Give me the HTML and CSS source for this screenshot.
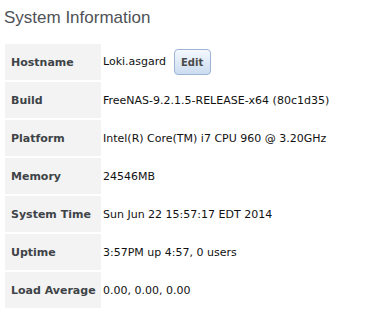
FILE: index.html
```html
<!DOCTYPE html>
<html lang="en">
<head>
    <meta charset="UTF-8">
    <title>System Information</title>
    <link rel="stylesheet" href="styles.css">
</head>
<body>
    <h1>System Information</h1>
    <table class="sysinfo">
        <tr>
            <th>Hostname</th>
            <td>Loki.asgard <button class="edit-btn">Edit</button></td>
        </tr>
        <tr>
            <th>Build</th>
            <td>FreeNAS-9.2.1.5-RELEASE-x64 (80c1d35)</td>
        </tr>
        <tr>
            <th>Platform</th>
            <td>Intel(R) Core(TM) i7 CPU 960 @ 3.20GHz</td>
        </tr>
        <tr>
            <th>Memory</th>
            <td>24546MB</td>
        </tr>
        <tr>
            <th>System Time</th>
            <td>Sun Jun 22 15:57:17 EDT 2014</td>
        </tr>
        <tr>
            <th>Uptime</th>
            <td>3:57PM up 4:57, 0 users</td>
        </tr>
        <tr>
            <th>Load Average</th>
            <td>0.00, 0.00, 0.00</td>
        </tr>
    </table>
</body>
</html>
```

FILE: styles.css
```css
body {
    margin: 0;
    padding: 0;
    background-color: #fff;
    font-family: "DejaVu Sans", Verdana, sans-serif;
    font-size: 11px;
}

h1 {
    font-family: "Liberation Sans", Arial, sans-serif;
    font-weight: normal;
    font-size: 17px;
    line-height: 20px;
    color: #4e5256;
    margin: 0;
    padding: 8px 0 0 4px;
    height: 34px;
}

.sysinfo {
    margin-left: 3px;
    border-spacing: 2px;
    border-collapse: separate;
}

.sysinfo th {
    width: 90px;
    height: 36px;
    padding: 0 0 0 6px;
    background-color: #f3f3f3;
    color: #3e4347;
    font-weight: bold;
    text-align: left;
    vertical-align: middle;
    white-space: nowrap;
}

.sysinfo td {
    height: 36px;
    padding: 0 0 0 0;
    color: #111;
    vertical-align: middle;
    white-space: nowrap;
}

.edit-btn {
    margin-left: 4px;
    width: 37px;
    height: 26px;
    padding: 0;
    font-family: "DejaVu Sans", Verdana, sans-serif;
    font-size: 10px;
    font-weight: bold;
    color: #4a4a4a;
    background: linear-gradient(#f4f8fd, #cbdcf0);
    border: 1px solid #9db5d2;
    border-radius: 4px;
    vertical-align: middle;
}
```
